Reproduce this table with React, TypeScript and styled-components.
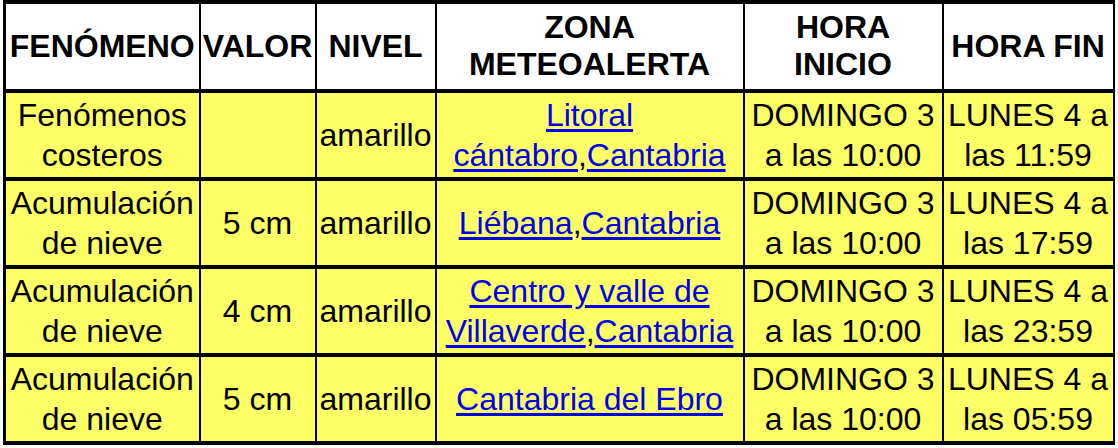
import React from 'react';
import styled, { createGlobalStyle } from 'styled-components';

const GlobalStyle = createGlobalStyle`
  html, body {
    margin: 0;
    padding: 0;
    background: #ffffff;
  }
`

const ALERTS = [
    {
        phenomenon: 'Fenómenos costeros',
        value: '',
        level: 'amarillo',
        zone: ['Litoral cántabro', 'Cantabria'],
        start: 'DOMINGO 3 a las 10:00',
        end: 'LUNES 4 a las 11:59',
    },
    {
        phenomenon: 'Acumulación de nieve',
        value: '5 cm',
        level: 'amarillo',
        zone: ['Liébana', 'Cantabria'],
        start: 'DOMINGO 3 a las 10:00',
        end: 'LUNES 4 a las 17:59',
    },
    {
        phenomenon: 'Acumulación de nieve',
        value: '4 cm',
        level: 'amarillo',
        zone: ['Centro y valle de Villaverde', 'Cantabria'],
        start: 'DOMINGO 3 a las 10:00',
        end: 'LUNES 4 a las 23:59',
    },
    {
        phenomenon: 'Acumulación de nieve',
        value: '5 cm',
        level: 'amarillo',
        zone: ['Cantabria del Ebro'],
        start: 'DOMINGO 3 a las 10:00',
        end: 'LUNES 4 a las 05:59',
    },
]

const COLUMNS = [
    { title: 'FENÓMENO', width: 195 },
    { title: 'VALOR', width: 116 },
    { title: 'NIVEL', width: 120 },
    { title: 'ZONA METEOALERTA', width: 308 },
    { title: 'HORA INICIO', width: 199 },
    { title: 'HORA FIN', width: 171 },
]

const Table = styled.table`
    margin: 0 0 0 3px;
    border-collapse: collapse;
    table-layout: fixed;
    font-family: "Liberation Sans", Arial, Helvetica, sans-serif;
    font-size: 32px;
    color: #000000;
    border-left: 3px solid #000000;
    border-right: 2px solid #000000;
    border-top: 4px solid #000000;
    border-bottom: 4px solid #000000;
`

const HeadCell = styled.th`
    background: #ffffff;
    font-weight: bold;
    line-height: 37px;
    padding: 5px 0 6px;
    text-align: center;
    vertical-align: middle;
    border-left: 2px solid #000000;
    border-right: 2px solid #000000;
    border-bottom: 4px solid #000000;
`

const Cell = styled.td`
    background: #ffff66;
    font-weight: normal;
    line-height: 40px;
    padding: 2px 0;
    text-align: center;
    vertical-align: middle;
    border: 2px solid #000000;
    border-top-width: 4px;
    border-bottom-width: 4px;
    overflow: hidden;
`

const ZoneLink = styled.a`
    color: #0000ee;
    text-decoration: underline;
    text-underline-offset: 3px;
`

const App = () => {
    return (
        <>
            <GlobalStyle />
            <Table>
                <colgroup>
                    {COLUMNS.map(col => (
                        <col key={col.title} style={{ width: col.width }} />
                    ))}
                </colgroup>
                <thead>
                    <tr>
                        {COLUMNS.map(col => (
                            <HeadCell key={col.title}>{col.title}</HeadCell>
                        ))}
                    </tr>
                </thead>
                <tbody>
                    {ALERTS.map((alert, i) => (
                        <tr key={i}>
                            <Cell>{alert.phenomenon}</Cell>
                            <Cell>{alert.value}</Cell>
                            <Cell>{alert.level}</Cell>
                            <Cell>
                                {alert.zone.map((z, j) => (
                                    <React.Fragment key={z}>
                                        {j > 0 && ','}
                                        <ZoneLink href="#">{z}</ZoneLink>
                                    </React.Fragment>
                                ))}
                            </Cell>
                            <Cell>{alert.start}</Cell>
                            <Cell>{alert.end}</Cell>
                        </tr>
                    ))}
                </tbody>
            </Table>
        </>
    )
}

export default App
